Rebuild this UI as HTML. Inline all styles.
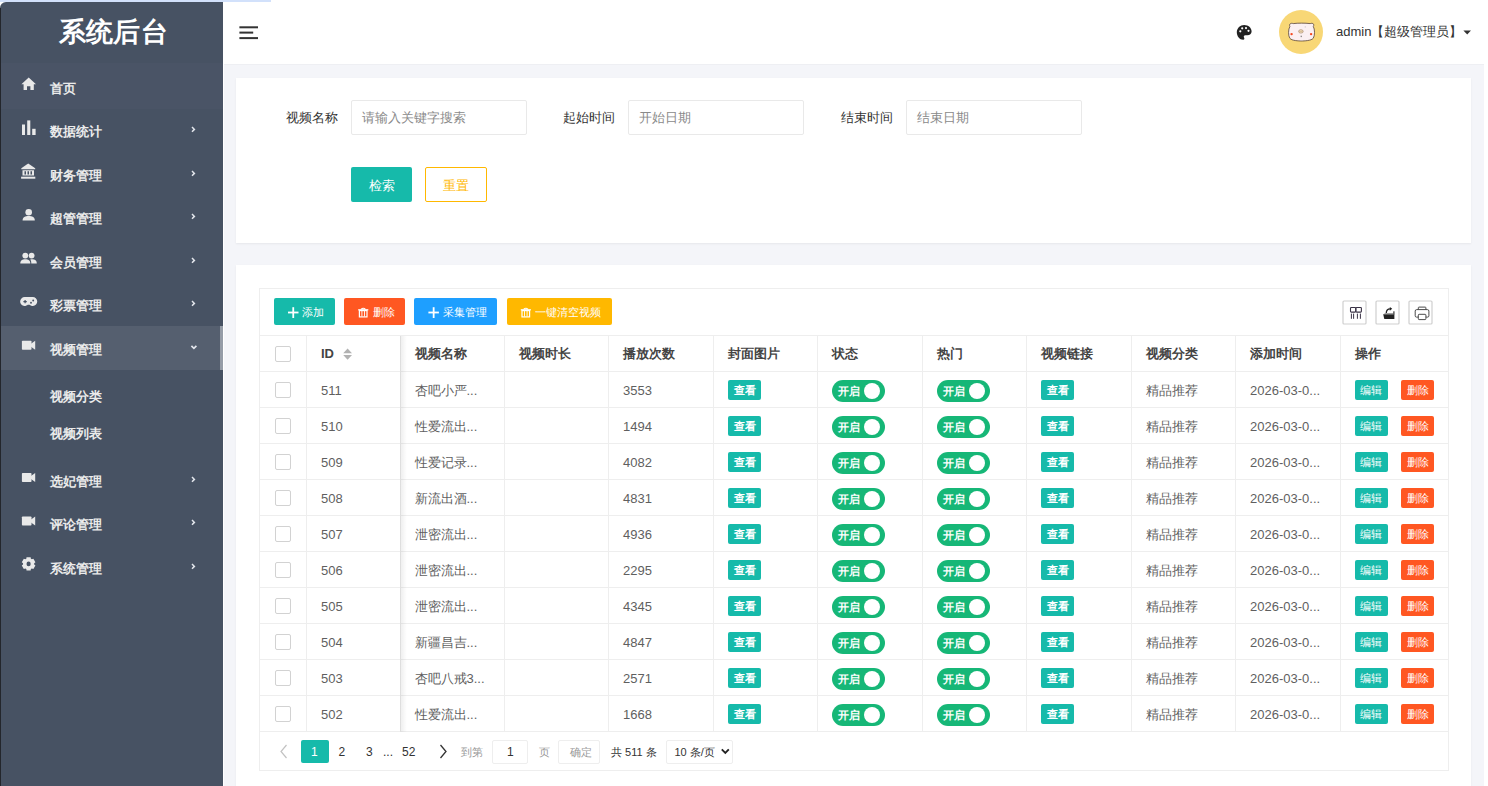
<!DOCTYPE html><html><head><meta charset="utf-8"><style>
*{box-sizing:border-box;margin:0;padding:0}
html,body{width:1488px;height:786px;overflow:hidden;background:#fff;font-family:"Liberation Sans",sans-serif;}
.a{position:absolute}
.w{white-space:nowrap}
#prog{left:0;top:0;width:271px;height:2px;background:#d2e1fb;z-index:9}
#side{left:0;top:2px;width:223px;height:784px;background:#475263;border-top-left-radius:6px;overflow:hidden}
.mt{left:50px;color:#ebebeb;font-size:13px;font-weight:bold;line-height:20px}
#hdr{left:223px;top:0;width:1265px;height:64px;background:#fff}
#main{left:224px;top:64px;width:1260px;height:722px;background:#f4f5f9}
.lbl{font-size:13px;color:#333;line-height:22px}
.inp{border:1px solid #e9e9e9;background:#fff;font-size:13px;color:#8a8a8a;line-height:33px;padding-left:10px;border-radius:2px}
.btn{font-size:13px;color:#fff;text-align:center;border-radius:2px}
.tb{font-size:12px;color:#fff;border-radius:2px;line-height:27px;height:27px;top:298px}
.hl{background:#eee}
.th{font-size:13px;font-weight:bold;color:#444;line-height:20px;top:344px}
.td{font-size:13px;color:#5f5f5f;line-height:21px}
.cb{width:16px;height:16px;border:1px solid #d2d2d2;border-radius:2px;background:#fff}
.bd{width:33px;height:20px;line-height:20px;font-size:11px;font-weight:bold;color:#fff;text-align:center;border-radius:2px}
.sw{width:53px;height:22px;border-radius:11px;background:#16b777;color:#fff;font-size:11px;font-weight:bold;line-height:22px}
.sw span{position:absolute;left:6px;top:0}
.sw i{position:absolute;right:5px;top:3px;width:16px;height:16px;border-radius:50%;background:#fff}
.pg{font-size:12px;color:#333;line-height:20px}
</style></head><body>
<div id="prog" class="a"></div>
<div id="side" class="a">
<div class="a" style="left:0;top:61px;width:223px;height:46px;background:#4a5466"></div>
<div class="a" style="left:0;top:324px;width:223px;height:44px;background:#555f6f"></div>
<div class="a" style="left:220px;top:324px;width:3px;height:44px;background:#959ca7"></div>
<div class="a" style="left:0;top:6px;width:1px;height:800px;background:#23262c"></div>
<div class="a w" style="left:1.8px;top:13.5px;width:223px;text-align:center;color:#fff;font-size:27px;letter-spacing:0.3px;font-weight:bold;line-height:32px">系统后台</div>
</div>
<div class="a w mt" style="top:79px">首页</div>
<div class="a w mt" style="top:122px">数据统计</div>
<div class="a w mt" style="top:166px">财务管理</div>
<div class="a w mt" style="top:209px">超管管理</div>
<div class="a w mt" style="top:253px">会员管理</div>
<div class="a w mt" style="top:296px">彩票管理</div>
<div class="a w mt" style="top:340px">视频管理</div>
<div class="a w mt" style="top:387px">视频分类</div>
<div class="a w mt" style="top:424px">视频列表</div>
<div class="a w mt" style="top:472px">选妃管理</div>
<div class="a w mt" style="top:515px">评论管理</div>
<div class="a w mt" style="top:559px">系统管理</div>
<svg class="a" style="left:0;top:0" width="223" height="786" viewBox="0 0 223 786" fill="#e9e9e9"><path d="M28.7 77.6 L21.4 84.2 L23.6 84.2 L23.6 90 L27 90 L27 86.3 L30.4 86.3 L30.4 90 L33.8 90 L33.8 84.2 L36 84.2 Z"/><rect x="22" y="124.5" width="3" height="10.5"/><rect x="27.2" y="120.4" width="3.1" height="14.6"/><rect x="32.2" y="128.8" width="3.4" height="6.2"/><path d="M28.2 163.4 L21.3 168.2 L21.3 169.3 L35.2 169.3 L35.2 168.2 Z"/><path d="M22.5 170.2 H34 V175.6 H22.5 Z M24.5 171.2 V174.6 H26 V171.2 Z M27.5 171.2 V174.6 H29 V171.2 Z M30.5 171.2 V174.6 H32 V171.2 Z" fill-rule="evenodd"/><rect x="21.1" y="176.7" width="14.2" height="2"/><circle cx="28.7" cy="212.2" r="3.3"/><path d="M22.6 220.6 C22.6 217 25.2 216 28.7 216 C32.2 216 34.8 217 34.8 220.6 Z"/><circle cx="25.3" cy="255.6" r="2.9"/><circle cx="31.6" cy="255.6" r="2.9"/><path d="M20.3 263.4 C20.3 260.3 22.3 259.3 25.3 259.3 C28.3 259.3 30.3 260.3 30.3 263.4 Z"/><path d="M31.3 263.4 C31.3 261.5 30.9 260.3 30.2 259.5 C31 259.3 31.3 259.3 31.8 259.3 C35 259.3 36.8 260.3 36.8 263.4 Z"/><path d="M24.9 297 H32.6 A4.5 4.5 0 0 1 32.9 306 C31.4 306 30.4 305.3 29.5 304.7 H27.8 C26.9 305.3 25.9 306 24.4 306 A4.5 4.5 0 0 1 24.9 297 Z"/><path d="M24.5 299.9 H25.7 V301 H26.8 V302.2 H25.7 V303.3 H24.5 V302.2 H23.4 V301 H24.5 Z" fill="#475263"/><circle cx="33.2" cy="300.5" r="0.95" fill="#475263"/><circle cx="31" cy="302.7" r="0.95" fill="#475263"/><rect x="21.9" y="340.7" width="9.6" height="9.1" rx="0.8"/><path d="M31 343.7 L35.2 340.7 V349.8 L31 346.8 Z"/><rect x="21.9" y="473" width="9.6" height="9.1" rx="0.8"/><path d="M31 476 L35.2 473 V482.1 L31 479.1 Z"/><rect x="21.9" y="516.5" width="9.6" height="9.1" rx="0.8"/><path d="M31 519.5 L35.2 516.5 V525.6 L31 522.6 Z"/><path d="M26.53 557.21 L30.67 557.21 L30.88 558.79 L31.89 559.37 L33.36 558.76 L35.43 562.35 L34.17 563.32 L34.17 564.48 L35.43 565.45 L33.36 569.04 L31.89 568.43 L30.88 569.01 L30.67 570.59 L26.53 570.59 L26.32 569.01 L25.31 568.43 L23.84 569.04 L21.77 565.45 L23.03 564.48 L23.03 563.32 L21.77 562.35 L23.84 558.76 L25.31 559.37 L26.32 558.79 Z M30.700000000000003 563.9 A2.1 2.4 0 1 0 26.5 563.9 A2.1 2.4 0 1 0 30.700000000000003 563.9 Z" fill-rule="evenodd"/><path d="M192 127 L194.4 129.4 L192 131.8" fill="none" stroke="#e3e6ec" stroke-width="1.5"/><path d="M192 171 L194.4 173.4 L192 175.8" fill="none" stroke="#e3e6ec" stroke-width="1.5"/><path d="M192 214 L194.4 216.4 L192 218.8" fill="none" stroke="#e3e6ec" stroke-width="1.5"/><path d="M192 258 L194.4 260.4 L192 262.8" fill="none" stroke="#e3e6ec" stroke-width="1.5"/><path d="M192 301 L194.4 303.4 L192 305.8" fill="none" stroke="#e3e6ec" stroke-width="1.5"/><path d="M191.4 345.8 L193.9 348.3 L196.4 345.8" fill="none" stroke="#e3e6ec" stroke-width="1.7"/><path d="M192 477 L194.4 479.4 L192 481.8" fill="none" stroke="#e3e6ec" stroke-width="1.5"/><path d="M192 520 L194.4 522.4 L192 524.8" fill="none" stroke="#e3e6ec" stroke-width="1.5"/><path d="M192 564 L194.4 566.4 L192 568.8" fill="none" stroke="#e3e6ec" stroke-width="1.5"/></svg>
<div id="hdr" class="a"></div>
<svg class="a" style="left:236px;top:20px" width="26" height="24" viewBox="236 20 26 24"><rect x="239.4" y="26.3" width="18.6" height="2" fill="#333"/><rect x="239.4" y="31.6" width="13.8" height="2" fill="#333"/><rect x="239.4" y="37.1" width="18.6" height="2" fill="#333"/></svg>
<svg class="a" style="left:1234px;top:22px" width="20" height="20" viewBox="1234 22 20 20"><path d="M1244.2 25 C1240.2 25 1236.8 28.2 1236.8 32.2 C1236.8 36.2 1239.6 39.7 1243.2 39.7 C1244.6 39.7 1244.6 38.4 1244 37.5 C1243.4 36.6 1244 35.3 1245.4 35.3 H1247.4 C1249.8 35.3 1251.6 33.6 1251.6 31.4 C1251.6 27.8 1248.3 25 1244.2 25 Z" fill="#222"/><circle cx="1240.3" cy="31.3" r="1.1" fill="#fff"/><circle cx="1242.2" cy="28.3" r="1.1" fill="#fff"/><circle cx="1246" cy="28.1" r="1.1" fill="#fff"/><circle cx="1248.5" cy="30.8" r="1.1" fill="#fff"/></svg>
<div class="a" style="left:1279px;top:10px;width:44px;height:44px;border-radius:50%;background:#f8d776"></div>
<svg class="a" style="left:1285px;top:20px" width="34" height="24" viewBox="1285 20 34 24"><path d="M1289.8 24.2 C1290.6 23.2 1292 23.1 1293.2 23.6 C1298 23 1305 23 1310.2 23.6 C1311.4 23.1 1312.9 23.2 1313.6 24.2 C1314 25 1313.7 25.9 1313.3 26.5 C1314.9 29 1315 35.8 1313.2 38.3 C1311.4 40.7 1304 41 1301.4 41 C1299 41 1291.6 40.7 1289.9 38.3 C1288 35.8 1288.2 29 1289.9 26.5 C1289.6 26 1289.4 25 1289.8 24.2 Z" fill="#fbf0f2" stroke="#4e3a33" stroke-width="0.75"/><circle cx="1291.6" cy="34.1" r="1.2" fill="#f5481e"/><circle cx="1311.1" cy="34.1" r="1.2" fill="#f5481e"/><ellipse cx="1300.9" cy="31.4" rx="2.3" ry="1.7" fill="#f6e3c0" stroke="#9a7a5c" stroke-width="0.6"/><path d="M1299.2 31.4 H1302.6" stroke="#b89468" stroke-width="0.5"/><rect x="1300.7" y="35.7" width="1" height="1.4" fill="#666"/><rect x="1304.8" y="26.5" width="0.8" height="0.9" fill="#aaa"/></svg>
<div class="a w" style="left:1336px;top:22px;font-size:13px;color:#333;line-height:20px">admin【超级管理员】</div>
<svg class="a" style="left:1460px;top:26px" width="14" height="12" viewBox="1460 26 14 12"><path d="M1463.4 30.6 H1471 L1467.2 34.4 Z" fill="#333"/></svg>
<div id="main" class="a"></div>
<div class="a" style="left:224px;top:64px;width:1260px;height:1px;background:rgba(0,0,0,.025)"></div>
<div class="a" style="left:236px;top:77.5px;width:1235px;height:165.5px;background:#fff;box-shadow:0 1px 2px rgba(0,0,0,.06)"></div>
<div class="a w lbl" style="left:286px;top:107px">视频名称</div>
<div class="a w inp" style="left:351px;top:100px;width:176px;height:35px">请输入关键字搜索</div>
<div class="a w lbl" style="left:563px;top:107px">起始时间</div>
<div class="a w inp" style="left:628px;top:100px;width:176px;height:35px">开始日期</div>
<div class="a w lbl" style="left:841px;top:107px">结束时间</div>
<div class="a w inp" style="left:906px;top:100px;width:176px;height:35px">结束日期</div>
<div class="a w btn" style="left:351px;top:167px;width:61px;height:35px;line-height:37px;background:#16baaa">检索</div>
<div class="a w btn" style="left:425px;top:167px;width:62px;height:35px;line-height:35px;border:1px solid #ffb800;color:#ffb800">重置</div>
<div class="a" style="left:236px;top:265px;width:1235px;height:530px;background:#fff;box-shadow:0 1px 2px rgba(0,0,0,.06)"></div>
<div class="a" style="left:259px;top:288px;width:1190px;height:483px;border:1px solid #eee"></div>
<div class="a tb" style="left:274px;width:61px;background:#16baaa"></div>
<div class="a w" style="left:302.3px;top:301.5px;font-size:11px;color:#fff;line-height:20px">添加</div>
<div class="a tb" style="left:344px;width:61px;background:#ff5722"></div>
<div class="a w" style="left:372.5px;top:301.5px;font-size:11px;color:#fff;line-height:20px">删除</div>
<div class="a tb" style="left:414px;width:83px;background:#1e9fff"></div>
<div class="a w" style="left:443.2px;top:301.5px;font-size:11px;color:#fff;line-height:20px">采集管理</div>
<div class="a tb" style="left:507px;width:105px;background:#ffb800"></div>
<div class="a w" style="left:534.5px;top:301.5px;font-size:11px;color:#fff;line-height:20px">一键清空视频</div>
<div class="a hl" style="left:260px;top:335px;width:1188px;height:1px"></div>
<div class="a hl" style="left:260px;top:371px;width:1188px;height:1px"></div>
<div class="a hl" style="left:260px;top:407px;width:1188px;height:1px"></div>
<div class="a hl" style="left:260px;top:443px;width:1188px;height:1px"></div>
<div class="a hl" style="left:260px;top:479px;width:1188px;height:1px"></div>
<div class="a hl" style="left:260px;top:515px;width:1188px;height:1px"></div>
<div class="a hl" style="left:260px;top:551px;width:1188px;height:1px"></div>
<div class="a hl" style="left:260px;top:587px;width:1188px;height:1px"></div>
<div class="a hl" style="left:260px;top:623px;width:1188px;height:1px"></div>
<div class="a hl" style="left:260px;top:659px;width:1188px;height:1px"></div>
<div class="a hl" style="left:260px;top:695px;width:1188px;height:1px"></div>
<div class="a hl" style="left:260px;top:731px;width:1188px;height:1px"></div>
<div class="a hl" style="left:306px;top:336px;width:1px;height:396px"></div>
<div class="a hl" style="left:400px;top:336px;width:1px;height:396px"></div>
<div class="a hl" style="left:504px;top:336px;width:1px;height:396px"></div>
<div class="a hl" style="left:608px;top:336px;width:1px;height:396px"></div>
<div class="a hl" style="left:713px;top:336px;width:1px;height:396px"></div>
<div class="a hl" style="left:817px;top:336px;width:1px;height:396px"></div>
<div class="a hl" style="left:922px;top:336px;width:1px;height:396px"></div>
<div class="a hl" style="left:1026px;top:336px;width:1px;height:396px"></div>
<div class="a hl" style="left:1131px;top:336px;width:1px;height:396px"></div>
<div class="a hl" style="left:1235px;top:336px;width:1px;height:396px"></div>
<div class="a hl" style="left:1340px;top:336px;width:1px;height:396px"></div>
<div class="a" style="left:400px;top:336px;width:7px;height:396px;background:linear-gradient(to right,rgba(0,0,0,0.07),rgba(0,0,0,0))"></div>
<div class="a cb" style="left:275px;top:346px"></div>
<div class="a w th" style="left:321px">ID</div>
<div class="a w th" style="left:414.5px">视频名称</div>
<div class="a w th" style="left:518.5px">视频时长</div>
<div class="a w th" style="left:622.5px">播放次数</div>
<div class="a w th" style="left:727.5px">封面图片</div>
<div class="a w th" style="left:831.5px">状态</div>
<div class="a w th" style="left:936.5px">热门</div>
<div class="a w th" style="left:1040.5px">视频链接</div>
<div class="a w th" style="left:1145.5px">视频分类</div>
<div class="a w th" style="left:1249.5px">添加时间</div>
<div class="a w th" style="left:1354.5px">操作</div>
<div class="a cb" style="left:275px;top:382px"></div>
<div class="a w td" style="left:321px;top:380px">511</div>
<div class="a w td" style="left:414.5px;top:380px">杏吧小严...</div>
<div class="a w td" style="left:623px;top:380px">3553</div>
<div class="a bd" style="left:728px;top:380px;background:#16baaa">查看</div>
<div class="a sw" style="left:832px;top:380px"><span>开启</span><i></i></div>
<div class="a sw" style="left:936.5px;top:380px"><span>开启</span><i></i></div>
<div class="a bd" style="left:1041px;top:380px;background:#16baaa">查看</div>
<div class="a w td" style="left:1145.5px;top:380px">精品推荐</div>
<div class="a w td" style="left:1250px;top:380px">2026-03-0...</div>
<div class="a bd" style="left:1354.5px;top:380px;width:33.5px;background:#16baaa;font-weight:normal">编辑</div>
<div class="a bd" style="left:1401px;top:380px;width:33px;background:#ff5722;font-weight:normal">删除</div>
<div class="a cb" style="left:275px;top:418px"></div>
<div class="a w td" style="left:321px;top:416px">510</div>
<div class="a w td" style="left:414.5px;top:416px">性爱流出...</div>
<div class="a w td" style="left:623px;top:416px">1494</div>
<div class="a bd" style="left:728px;top:416px;background:#16baaa">查看</div>
<div class="a sw" style="left:832px;top:416px"><span>开启</span><i></i></div>
<div class="a sw" style="left:936.5px;top:416px"><span>开启</span><i></i></div>
<div class="a bd" style="left:1041px;top:416px;background:#16baaa">查看</div>
<div class="a w td" style="left:1145.5px;top:416px">精品推荐</div>
<div class="a w td" style="left:1250px;top:416px">2026-03-0...</div>
<div class="a bd" style="left:1354.5px;top:416px;width:33.5px;background:#16baaa;font-weight:normal">编辑</div>
<div class="a bd" style="left:1401px;top:416px;width:33px;background:#ff5722;font-weight:normal">删除</div>
<div class="a cb" style="left:275px;top:454px"></div>
<div class="a w td" style="left:321px;top:452px">509</div>
<div class="a w td" style="left:414.5px;top:452px">性爱记录...</div>
<div class="a w td" style="left:623px;top:452px">4082</div>
<div class="a bd" style="left:728px;top:452px;background:#16baaa">查看</div>
<div class="a sw" style="left:832px;top:452px"><span>开启</span><i></i></div>
<div class="a sw" style="left:936.5px;top:452px"><span>开启</span><i></i></div>
<div class="a bd" style="left:1041px;top:452px;background:#16baaa">查看</div>
<div class="a w td" style="left:1145.5px;top:452px">精品推荐</div>
<div class="a w td" style="left:1250px;top:452px">2026-03-0...</div>
<div class="a bd" style="left:1354.5px;top:452px;width:33.5px;background:#16baaa;font-weight:normal">编辑</div>
<div class="a bd" style="left:1401px;top:452px;width:33px;background:#ff5722;font-weight:normal">删除</div>
<div class="a cb" style="left:275px;top:490px"></div>
<div class="a w td" style="left:321px;top:488px">508</div>
<div class="a w td" style="left:414.5px;top:488px">新流出酒...</div>
<div class="a w td" style="left:623px;top:488px">4831</div>
<div class="a bd" style="left:728px;top:488px;background:#16baaa">查看</div>
<div class="a sw" style="left:832px;top:488px"><span>开启</span><i></i></div>
<div class="a sw" style="left:936.5px;top:488px"><span>开启</span><i></i></div>
<div class="a bd" style="left:1041px;top:488px;background:#16baaa">查看</div>
<div class="a w td" style="left:1145.5px;top:488px">精品推荐</div>
<div class="a w td" style="left:1250px;top:488px">2026-03-0...</div>
<div class="a bd" style="left:1354.5px;top:488px;width:33.5px;background:#16baaa;font-weight:normal">编辑</div>
<div class="a bd" style="left:1401px;top:488px;width:33px;background:#ff5722;font-weight:normal">删除</div>
<div class="a cb" style="left:275px;top:526px"></div>
<div class="a w td" style="left:321px;top:524px">507</div>
<div class="a w td" style="left:414.5px;top:524px">泄密流出...</div>
<div class="a w td" style="left:623px;top:524px">4936</div>
<div class="a bd" style="left:728px;top:524px;background:#16baaa">查看</div>
<div class="a sw" style="left:832px;top:524px"><span>开启</span><i></i></div>
<div class="a sw" style="left:936.5px;top:524px"><span>开启</span><i></i></div>
<div class="a bd" style="left:1041px;top:524px;background:#16baaa">查看</div>
<div class="a w td" style="left:1145.5px;top:524px">精品推荐</div>
<div class="a w td" style="left:1250px;top:524px">2026-03-0...</div>
<div class="a bd" style="left:1354.5px;top:524px;width:33.5px;background:#16baaa;font-weight:normal">编辑</div>
<div class="a bd" style="left:1401px;top:524px;width:33px;background:#ff5722;font-weight:normal">删除</div>
<div class="a cb" style="left:275px;top:562px"></div>
<div class="a w td" style="left:321px;top:560px">506</div>
<div class="a w td" style="left:414.5px;top:560px">泄密流出...</div>
<div class="a w td" style="left:623px;top:560px">2295</div>
<div class="a bd" style="left:728px;top:560px;background:#16baaa">查看</div>
<div class="a sw" style="left:832px;top:560px"><span>开启</span><i></i></div>
<div class="a sw" style="left:936.5px;top:560px"><span>开启</span><i></i></div>
<div class="a bd" style="left:1041px;top:560px;background:#16baaa">查看</div>
<div class="a w td" style="left:1145.5px;top:560px">精品推荐</div>
<div class="a w td" style="left:1250px;top:560px">2026-03-0...</div>
<div class="a bd" style="left:1354.5px;top:560px;width:33.5px;background:#16baaa;font-weight:normal">编辑</div>
<div class="a bd" style="left:1401px;top:560px;width:33px;background:#ff5722;font-weight:normal">删除</div>
<div class="a cb" style="left:275px;top:598px"></div>
<div class="a w td" style="left:321px;top:596px">505</div>
<div class="a w td" style="left:414.5px;top:596px">泄密流出...</div>
<div class="a w td" style="left:623px;top:596px">4345</div>
<div class="a bd" style="left:728px;top:596px;background:#16baaa">查看</div>
<div class="a sw" style="left:832px;top:596px"><span>开启</span><i></i></div>
<div class="a sw" style="left:936.5px;top:596px"><span>开启</span><i></i></div>
<div class="a bd" style="left:1041px;top:596px;background:#16baaa">查看</div>
<div class="a w td" style="left:1145.5px;top:596px">精品推荐</div>
<div class="a w td" style="left:1250px;top:596px">2026-03-0...</div>
<div class="a bd" style="left:1354.5px;top:596px;width:33.5px;background:#16baaa;font-weight:normal">编辑</div>
<div class="a bd" style="left:1401px;top:596px;width:33px;background:#ff5722;font-weight:normal">删除</div>
<div class="a cb" style="left:275px;top:634px"></div>
<div class="a w td" style="left:321px;top:632px">504</div>
<div class="a w td" style="left:414.5px;top:632px">新疆昌吉...</div>
<div class="a w td" style="left:623px;top:632px">4847</div>
<div class="a bd" style="left:728px;top:632px;background:#16baaa">查看</div>
<div class="a sw" style="left:832px;top:632px"><span>开启</span><i></i></div>
<div class="a sw" style="left:936.5px;top:632px"><span>开启</span><i></i></div>
<div class="a bd" style="left:1041px;top:632px;background:#16baaa">查看</div>
<div class="a w td" style="left:1145.5px;top:632px">精品推荐</div>
<div class="a w td" style="left:1250px;top:632px">2026-03-0...</div>
<div class="a bd" style="left:1354.5px;top:632px;width:33.5px;background:#16baaa;font-weight:normal">编辑</div>
<div class="a bd" style="left:1401px;top:632px;width:33px;background:#ff5722;font-weight:normal">删除</div>
<div class="a cb" style="left:275px;top:670px"></div>
<div class="a w td" style="left:321px;top:668px">503</div>
<div class="a w td" style="left:414.5px;top:668px">杏吧八戒3...</div>
<div class="a w td" style="left:623px;top:668px">2571</div>
<div class="a bd" style="left:728px;top:668px;background:#16baaa">查看</div>
<div class="a sw" style="left:832px;top:668px"><span>开启</span><i></i></div>
<div class="a sw" style="left:936.5px;top:668px"><span>开启</span><i></i></div>
<div class="a bd" style="left:1041px;top:668px;background:#16baaa">查看</div>
<div class="a w td" style="left:1145.5px;top:668px">精品推荐</div>
<div class="a w td" style="left:1250px;top:668px">2026-03-0...</div>
<div class="a bd" style="left:1354.5px;top:668px;width:33.5px;background:#16baaa;font-weight:normal">编辑</div>
<div class="a bd" style="left:1401px;top:668px;width:33px;background:#ff5722;font-weight:normal">删除</div>
<div class="a cb" style="left:275px;top:706px"></div>
<div class="a w td" style="left:321px;top:704px">502</div>
<div class="a w td" style="left:414.5px;top:704px">性爱流出...</div>
<div class="a w td" style="left:623px;top:704px">1668</div>
<div class="a bd" style="left:728px;top:704px;background:#16baaa">查看</div>
<div class="a sw" style="left:832px;top:704px"><span>开启</span><i></i></div>
<div class="a sw" style="left:936.5px;top:704px"><span>开启</span><i></i></div>
<div class="a bd" style="left:1041px;top:704px;background:#16baaa">查看</div>
<div class="a w td" style="left:1145.5px;top:704px">精品推荐</div>
<div class="a w td" style="left:1250px;top:704px">2026-03-0...</div>
<div class="a bd" style="left:1354.5px;top:704px;width:33.5px;background:#16baaa;font-weight:normal">编辑</div>
<div class="a bd" style="left:1401px;top:704px;width:33px;background:#ff5722;font-weight:normal">删除</div>
<svg class="a" style="left:0;top:0" width="1488" height="786" viewBox="0 0 1488 786"><rect x="288" y="311.6" width="10.5" height="1.8" fill="#fff"/><rect x="292.35" y="307.2" width="1.8" height="10.8" fill="#fff"/><rect x="428.4" y="311.6" width="10.5" height="1.8" fill="#fff"/><rect x="432.75" y="307.2" width="1.8" height="10.8" fill="#fff"/><path d="M358.2 309.8 H368.3" stroke="#fff" stroke-width="1.3"/><path d="M361 309.3 Q363.25 307.2 365.5 309.3" fill="none" stroke="#fff" stroke-width="1.1"/><rect x="359.4" y="310.6" width="7.6" height="6.3" fill="none" stroke="#fff" stroke-width="1.2"/><path d="M361.9 311 V316.5 M364.5 311 V316.5" stroke="#fff" stroke-width="0.9"/><path d="M520.8000000000001 309.8 H530.9" stroke="#fff" stroke-width="1.3"/><path d="M523.6 309.3 Q525.85 307.2 528.1 309.3" fill="none" stroke="#fff" stroke-width="1.1"/><rect x="522.0" y="310.6" width="7.6" height="6.3" fill="none" stroke="#fff" stroke-width="1.2"/><path d="M524.5 311 V316.5 M527.1 311 V316.5" stroke="#fff" stroke-width="0.9"/><rect x="1343.0" y="301" width="23" height="23" rx="1" fill="#fff" stroke="#cfcfcf" stroke-width="1.2"/><rect x="1376.0" y="301" width="23" height="23" rx="1" fill="#fff" stroke="#cfcfcf" stroke-width="1.2"/><rect x="1409.0" y="301" width="23" height="23" rx="1" fill="#fff" stroke="#cfcfcf" stroke-width="1.2"/><rect x="1350.5" y="307.5" width="5.2" height="4.6" rx="0.8" fill="none" stroke="#3a3346" stroke-width="1.1"/><rect x="1355.9" y="307.5" width="5.5" height="4.6" rx="0.8" fill="none" stroke="#3a3346" stroke-width="1.1"/><path d="M1351.4 313.6 V318.8 M1353.6 313.6 V318.8 M1357.4 313.6 V318.8 M1360.4 313.6 V318.8" stroke="#3a3346" stroke-width="1"/><path d="M1383.2 314.3 H1394.4 V319 H1384.3 Z" fill="#222"/><path d="M1384.5 313.3 H1393.4 V314.3 H1384.5 Z" fill="#777"/><rect x="1393.3" y="311.3" width="1.2" height="3.2" fill="#333"/><path d="M1386.3 313 C1386.3 309.8 1388 308.8 1390.2 308.8" fill="none" stroke="#222" stroke-width="1.3"/><path d="M1389.8 306.9 L1392.2 308.8 L1389.8 310.7 Z" fill="#222"/><path d="M1416.7 309.6 H1427.4 Q1428.9 309.6 1428.9 311.1 V315.8 Q1428.9 317.1 1427.6 317.1 H1416.5 Q1415.2 317.1 1415.2 315.8 V311.1 Q1415.2 309.6 1416.7 309.6 Z" fill="none" stroke="#4a4a4a" stroke-width="1"/><path d="M1418.3 309.5 V307.8 Q1418.3 307.1 1419 307.1 H1425.2 Q1425.9 307.1 1425.9 307.8 V309.5" fill="none" stroke="#4a4a4a" stroke-width="1"/><rect x="1418.3" y="314.3" width="7.6" height="5.3" rx="0.8" fill="#fff" stroke="#4a4a4a" stroke-width="1"/></svg>
<svg class="a" style="left:0;top:0" width="1488" height="786" viewBox="0 0 1488 786"><path d="M343.2 353.3 L347.6 348.6 L352 353.3 Z M343.2 355.1 L352 355.1 L347.6 359.7 Z" fill="#b2b2b2"/></svg>
<div class="a" style="left:301px;top:740px;width:28px;height:23px;background:#16baaa;border-radius:2px"></div>
<div class="a w pg" style="left:311px;top:741.5px;color:#fff">1</div>
<div class="a w pg" style="left:338.5px;top:741.5px">2</div>
<div class="a w pg" style="left:366px;top:741.5px">3</div>
<div class="a w pg" style="left:383px;top:741.5px">...</div>
<div class="a w pg" style="left:402px;top:741.5px">52</div>
<svg class="a" style="left:0;top:0" width="1488" height="786" viewBox="0 0 1488 786"><path d="M286.5 745 L281 751.5 L286.5 758" fill="none" stroke="#c2c2c2" stroke-width="1.2"/><path d="M440.5 745 L446 751.5 L440.5 758" fill="none" stroke="#333" stroke-width="1.3"/><path d="M721.8 749.4 L725.3 752.9 L728.8 749.4" fill="none" stroke="#222" stroke-width="1.9"/></svg>
<div class="a w pg" style="left:461px;top:741.5px;color:#999;font-size:11px">到第</div>
<div class="a" style="left:492px;top:740px;width:36px;height:24px;border:1px solid #eee;border-radius:2px"></div>
<div class="a w pg" style="left:507px;top:741.5px">1</div>
<div class="a w pg" style="left:538.5px;top:741.5px;color:#999;font-size:11px">页</div>
<div class="a" style="left:558px;top:740px;width:42px;height:24px;border:1px solid #eee;border-radius:2px"></div>
<div class="a w pg" style="left:569.5px;top:742px;color:#999;font-size:11px">确定</div>
<div class="a w pg" style="left:611px;top:741.5px;font-size:11px">共 511 条</div>
<div class="a" style="left:666px;top:740px;width:67px;height:24px;border:1px solid #eee;border-radius:2px"></div>
<div class="a w pg" style="left:674.5px;top:741.5px;font-size:11px">10 条/页</div>
</body></html>
